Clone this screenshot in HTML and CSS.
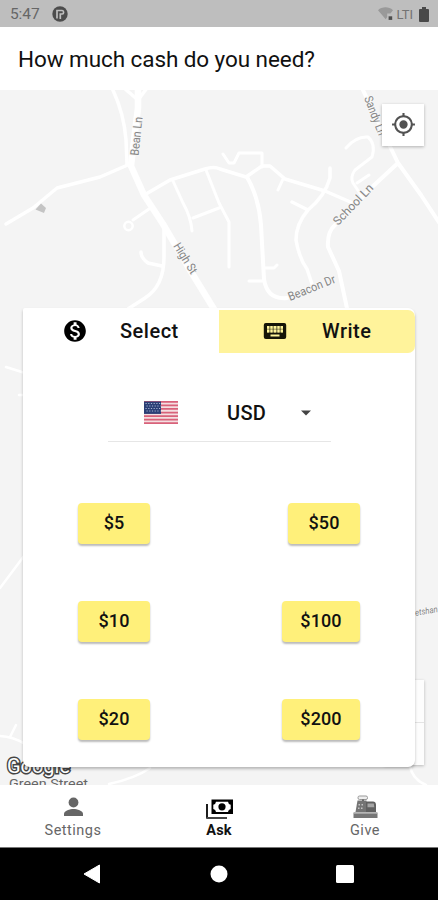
FILE: index.html
```html
<!DOCTYPE html>
<html lang="en">
<head>
<meta charset="utf-8">
<title>Ask for cash</title>
<link rel="stylesheet" href="styles.css">
</head>
<body>
<div class="screen">
  <header class="status">
    <span class="clock">5:47</span>
    <svg class="status-app" width="16" height="16" viewBox="0 0 16 16"><circle cx="8" cy="8" r="7.7" fill="#4c4c4c"/><path d="M5 12.500V4.500h5.200q1.400 0 1.400 1.700T10.200 8H8.300v5" fill="none" stroke="#bebebe" stroke-width="1.700"/></svg>
    <svg class="wifi" width="15" height="14" viewBox="0 0 15 14"><path d="M0 3.2C4-.6 11-.6 15 3.2L12.4 6.5H9.2V10L7.7 12.2Z" fill="#999"/><path d="M10.6 9.3h3.6v3.6h-3.6z" fill="#4d4d4d"/></svg>
    <span class="signal">LTI</span>
    <svg class="battery" width="10" height="15" viewBox="0 0 10 15"><path d="M3 0h4v2h2q1 0 1 1v11q0 1-1 1H1q-1 0-1-1V3q0-1 1-1h2z" fill="#494949"/></svg>
  </header>
  <h1 class="title">How much cash do you need?</h1>

  <main class="map">
    <svg class="map-art" width="438" height="695" viewBox="0 90 438 695">
      <g fill="none" stroke="#fff" stroke-linecap="round" stroke-linejoin="round">
        <path stroke-width="6.5" d="M138 86V108L134 140L131 166L144 195L163 224L190 270L217 314"/>
        <path stroke-width="3.5" d="M112 88Q124 113 126 140L127 164M124 88L138 100L147 88"/>
        <path stroke-width="3.5" d="M130 164L100 177L57 188L33 208L6 224"/>
        <path stroke-width="3.5" d="M146 194L170 180L205 169Q214 166 220 169L246 177L262 166H270L285 179L325 191L355 204"/>
        <path stroke-width="3" d="M173 181L183 203Q191 217 192 231M206 170L219 203L229 222V267M193 218L219 208"/>
        <path stroke-width="3" d="M149 209L133 220"/><circle cx="128.500" cy="226" r="4.200" stroke-width="2.500"/>
        <path stroke-width="3.500" d="M164 228V257Q164 286 145 298L128 309M162 266L148 263Q141 258 141 252"/>
        <path stroke-width="3" d="M223 154L229 163L234 163L239 153H262V167M283 179L278 190"/>
        <path stroke-width="4" d="M247 177Q259 198 261 225L264 279Q267 300 287 298"/>
        <path stroke-width="3" d="M265 268H274L277 265M263 281H249"/>
        <path stroke-width="3.500" d="M330 168V178Q325 196 308 210Q296 224 296 240Q299 258 307 269L312 284M308 210L292 202"/>
        <path stroke-width="3" d="M346 148Q356 136 368 137Q376 144 372 157L355 170Q350 177 353 183L361 195M357 183L369 175"/>
        <path stroke-width="4" d="M361 86L398 163L421 195L440 224M398 163L371 188L335 225Q327 232 328 247L339 271L348 313"/>
        <path stroke-width="2.500" d="M6 367L25 373M19 395H24M0 588L24 556M-2 736Q12 736 25 744M10 737L16 725M109 784Q136 778 150 768M410 766Q412 779 426 785"/>
      </g>
      <path d="M41 203.500L46 208L44 213L35.500 209.500Z" fill="#c4c4c4"/>
      <g class="street">
        <text transform="translate(138.500 156) rotate(-84)" textLength="39" lengthAdjust="spacingAndGlyphs">Bean Ln</text>
        <text transform="translate(173 246) rotate(58)" textLength="34" lengthAdjust="spacingAndGlyphs">High St</text>
        <text transform="translate(364 98) rotate(69)" textLength="41" lengthAdjust="spacingAndGlyphs">Sandy Ln</text>
        <text transform="translate(338 226) rotate(-46)" textLength="52" lengthAdjust="spacingAndGlyphs">School Ln</text>
        <text transform="translate(290 301) rotate(-22)" textLength="50" lengthAdjust="spacingAndGlyphs">Beacon Dr</text>
        <text class="tiny" transform="translate(415.500 616) rotate(-10)" textLength="23" lengthAdjust="spacingAndGlyphs">etshan</text>
      </g>
      <text class="brand-outline" x="7" y="773" textLength="63" lengthAdjust="spacingAndGlyphs">Google</text>
      <text class="place" x="9" y="787.500" textLength="79" lengthAdjust="spacingAndGlyphs">Green Street</text>
    </svg>
    <button class="locate" aria-label="My location">
      <svg width="25" height="25" viewBox="0 0 24 24" fill="#525252"><path d="M12 8a4 4 0 1 0 0 8 4 4 0 0 0 0-8zm8.940 3A8.990 8.990 0 0 0 13 3.060V1h-2v2.060A8.990 8.990 0 0 0 3.060 11H1v2h2.060A8.990 8.990 0 0 0 11 20.940V23h2v-2.060A8.990 8.990 0 0 0 20.940 13H23v-2h-2.060zM12 19a7 7 0 1 1 0-14 7 7 0 0 1 0 14z"/></svg>
    </button>
    <div class="zoom-control"><span></span><span></span></div>

    <section class="card">
      <div class="tabs">
        <div class="tab select">
          <svg width="26" height="26" viewBox="0 0 24 24"><path d="M12 2C6.480 2 2 6.480 2 12s4.480 10 10 10 10-4.480 10-10S17.520 2 12 2zm1.410 16.090V20h-2.670v-1.930c-1.710-.36-3.160-1.460-3.270-3.400h1.960c.1 1.050.82 1.870 2.650 1.870 1.960 0 2.400-.98 2.400-1.590 0-.83-.44-1.610-2.670-2.140-2.480-.6-4.180-1.620-4.180-3.670 0-1.720 1.390-2.840 3.110-3.210V4h2.670v1.950c1.860.45 2.790 1.860 2.850 3.390H14.300c-.05-1.110-.64-1.870-2.220-1.870-1.500 0-2.400.68-2.400 1.640 0 .84.65 1.390 2.670 1.910s4.180 1.390 4.180 3.910c-.01 1.830-1.380 2.830-3.120 3.160z" stroke="#000" stroke-width="0"/></svg>
          <span>Select</span>
        </div>
        <div class="tab write">
          <svg width="24" height="18" viewBox="0 0 24 18"><rect x=".8" y="1" width="22.400" height="16" rx="2" fill="#151508"/><path d="M4 4h16v6.500H4z" fill="#fff59a" opacity=".55"/><path d="M4 4h2v6.500H4zm3.500 0h2v6.500h-2zm3.500 0h2v6.500h-2zm3.500 0h2v6.500h-2zm3.500 0h2v6.500h-2zM7.500 12.500h9v2h-9z" fill="#fff59a"/><path d="M4 7.200h16" stroke="#151508" stroke-width=".7" opacity=".6"/></svg>
          <span>Write</span>
        </div>
      </div>
      <div class="currency">
        <svg class="flag" width="34" height="23" viewBox="0 0 34 23"><rect width="34" height="23" fill="#f4dfe1"/><path d="M0 .9h34M0 4.400h34M0 7.900h34M0 11.500h34M0 15h34M0 18.600h34M0 22.100h34" stroke="#d8627a" stroke-width="1.750"/><path d="M0 .5h17v12.400H0z" fill="#2b3f76"/><path d="M1.500 2.500h15M2.500 5h14M1.500 7.500h15M2.500 10h14" stroke="#a7b3d2" stroke-width="1.100" stroke-dasharray="1.200 1.500"/></svg>
        <span class="code">USD</span>
        <svg class="arrow" width="10" height="6" viewBox="0 0 10 6"><path d="M0 .5h10L5 5.500z" fill="#444"/></svg>
      </div>
      <div class="amounts">
        <button>$5</button><button>$50</button>
        <button>$10</button><button class="wide">$100</button>
        <button>$20</button><button class="wide">$200</button>
      </div>
    </section>
  </main>

  <nav class="nav">
    <div class="item">
      <svg width="28" height="28" viewBox="0 0 28 28" fill="#666"><circle cx="14.500" cy="9.500" r="4.900"/><path d="M5 23v-2.300c0-3 6-4.700 9.500-4.700s9.500 1.700 9.500 4.700V23z"/></svg>
      <span>Settings</span>
    </div>
    <div class="item active">
      <svg width="28" height="28" viewBox="0 0 28 28"><path d="M2 11v14.500" stroke="#111" stroke-width="1.900"/><path d="M1.500 25H22" stroke="#444" stroke-width="2"/><path d="M6.500 6.500H28V21H6.500z"/><path d="M11 8.800h12q.3 2.600 2.700 3v4.200q-2.400.4-2.700 3H11q-.3-2.600-2.700-3v-4.200q2.400-.4 2.700-3z" fill="#fff"/><circle cx="17" cy="13.800" r="3.600"/></svg>
      <span>Ask</span>
    </div>
    <div class="item">
      <svg width="28" height="28" viewBox="0 0 28 28" fill="#606060"><rect x="7" y="3" width="9.500" height="3.500" rx="1.500" fill="#eee" stroke="#999"/><path d="M11 6.500h2v3h-2z"/><path d="M6.500 7.500h9V19H4.500z" fill="#747474"/><path d="M15 8.500h7q2.700 0 3 3V19H15z"/><path d="M16.500 10.500h6.300l.5 3.800h-6.800z" fill="#a5a5a5"/><path d="M7.500 11H9v1.500H7.500zm3 0H12v1.500h-1.500zM7 14.500h1.500V16H7zm3 0h1.500V16H10z" fill="#c4c4c4"/><path d="M2.500 19.500h24V25h-24z" fill="#777"/><path d="M3 20.300h23" stroke="#aaa" stroke-width="1.200"/></svg>
      <span>Give</span>
    </div>
  </nav>
  <footer class="system">
    <svg width="18" height="20" viewBox="0 0 18 20"><path d="M1 10L16.500 1v18z" fill="#fff" stroke="#fff" stroke-linejoin="round"/></svg>
    <svg width="18" height="18" viewBox="0 0 18 18"><circle cx="9" cy="9" r="8.500" fill="#fff"/></svg>
    <svg width="18" height="18" viewBox="0 0 18 18"><rect width="18" height="18" rx="1.500" fill="#fff"/></svg>
  </footer>
</div>
</body>
</html>
```

FILE: styles.css
```css
* { box-sizing: border-box; }
body { margin: 0; font-family: Roboto, "Liberation Sans", sans-serif; color: #111; }
button { border: 0; padding: 0; font: inherit; color: inherit; }
svg { display: block; flex: none; }
.screen { width: 438px; height: 900px; display: flex; flex-direction: column; overflow: hidden; background: #fff; }

.status { height: 27px; flex: none; display: flex; align-items: center; padding: 1px 9px 0 10px; background: #bebebe; color: #666; }
.clock { font-size: 15.5px; width: 42px; letter-spacing: -.1px; }
.wifi { margin-left: auto; }
.signal { font-size: 13px; margin: 0 6px 0 3px; color: #737373; }

.title { margin: 0; height: 63px; flex: none; padding: 2px 0 0 18px; font-size: 22.5px; line-height: 61px; font-weight: 400; letter-spacing: -.08px; white-space: nowrap; }

.map { position: relative; height: 695px; flex: none; overflow: hidden; background: #f4f4f4; padding: 218px 23px 0 23px; }
.map-art { position: absolute; inset: 0; }
.street { font-size: 12px; fill: #858585; stroke: #f7f7f7; stroke-width: 2px; paint-order: stroke; }
.street .tiny { font-size: 9px; font-style: italic; }
.brand-outline { font-size: 21px; fill: #fff; stroke: #444; stroke-width: 3px; paint-order: stroke; }
.place { font-size: 13.5px; fill: #666; }
.locate { position: absolute; top: 14px; right: 14px; width: 42px; height: 42px; display: grid; place-items: center; padding-bottom: 2px; background: #fff; box-shadow: 0 1px 3px rgba(0, 0, 0, .28); }
.zoom-control { position: absolute; right: 14px; top: 590px; width: 40px; height: 85px; display: grid; background: #fdfdfd; box-shadow: 0 1px 3px rgba(0, 0, 0, .25); }
.zoom-control span + span { border-top: 1px solid #e4e4e4; }

.card { position: relative; height: 459px; background: #fff; border-radius: 2px 7px 7px 7px; box-shadow: 0 2px 3px rgba(0, 0, 0, .25); }
.tabs { display: flex; padding-top: 1.5px; height: 45px; }
.tab { width: 196px; display: flex; align-items: center; font-size: 20px; font-weight: 500; letter-spacing: .5px; }
.select { padding-left: 39px; gap: 32px; }
.write { padding-left: 44px; gap: 35px; background: #fff39b; border-radius: 0 7px 7px 0; }

.currency { display: flex; align-items: center; margin: 31px 84px 0 85px; height: 58px; padding-left: 36px; border-bottom: 1.5px solid #e6e6e6; }
.code { font-size: 20px; font-weight: 500; letter-spacing: .3px; margin: 0 34px 0 49px; width: 40px; }

.amounts { display: grid; grid-template-columns: auto auto; justify-content: space-between; row-gap: 57px; padding: 60.5px 55px 0; }
.amounts button { width: 72px; height: 41px; padding-bottom: 2px; justify-self: end; border-radius: 4px; background: #fff07a; box-shadow: 0 2px 2px rgba(0, 0, 0, .27); font-size: 18px; font-weight: 500; letter-spacing: .1px; }
.amounts .wide { width: 78px; }

.nav { height: 63px; flex: none; display: grid; grid-template-columns: repeat(3, 146px); border-bottom: 1px solid #777; background: #fff; }
.item { display: flex; flex-direction: column; align-items: center; padding-top: 8px; font-size: 14.5px; line-height: 17px; letter-spacing: .5px; color: #666; }
.item span { margin-top: 1px; }
.item.active { color: #111; font-weight: 700; letter-spacing: .2px; }

.system { flex: 1; display: flex; align-items: center; justify-content: space-between; padding: 0 84px 0 83px; background: #000; }
```
